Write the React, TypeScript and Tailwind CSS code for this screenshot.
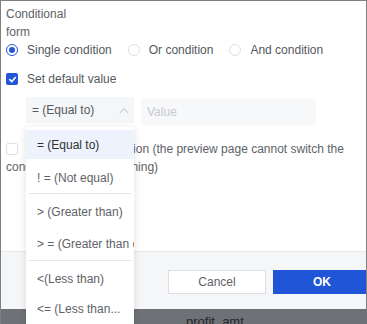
import React from "react";

function Radio({ checked, label, last }: { checked?: boolean; label: string; last?: boolean }) {
  return (
    <div className={`flex items-center ${last ? "" : "mr-[16px]"}`}>
      {checked ? (
        <span className="w-[12px] h-[12px] rounded-full border border-[#2356d6] flex items-center justify-center bg-white">
          <span className="w-[6px] h-[6px] rounded-full bg-[#2356d6]" />
        </span>
      ) : (
        <span className="w-[12px] h-[12px] rounded-full border border-[#dcdfe6] bg-white" />
      )}
      <span className="ml-[9px] text-[#55585d]">{label}</span>
    </div>
  );
}

export default function App() {
  return (
    <div className="relative w-[367px] h-[324px] overflow-hidden bg-[#7f7f7f] font-['Liberation_Sans',Arial,sans-serif] text-[12px]">
      <div className="flex flex-col pt-[1px] pl-[1px]">
        <div className="w-[365px] h-[308px] bg-white flex flex-col overflow-hidden">
          <div className="flex-1 pl-[5px] pr-[5px] pt-[4px] text-[#606266]">
            <div className="w-[70px] leading-[18px] text-[#606266]">Conditional form</div>
            <div className="flex items-center h-[18px] leading-[18px]">
              <Radio checked label="Single condition" />
              <Radio label="Or condition" />
              <Radio label="And condition" last />
            </div>
            <div className="flex items-center h-[18px] mt-[11px] leading-[18px]">
              <span className="w-[12px] h-[12px] rounded-[2px] bg-[#2356d6] flex items-center justify-center">
                <svg width="9" height="9" viewBox="0 0 10 10">
                  <polyline points="2,5.2 4.2,7.3 8.2,2.8" fill="none" stroke="white" strokeWidth="1.8" strokeLinecap="round" strokeLinejoin="round" />
                </svg>
              </span>
              <span className="ml-[9px] text-[#55585d]">Set default value</span>
            </div>
            <div className="flex mt-[9px] pl-[20px]">
              <div className="w-[108px] h-[26px] bg-[#f5f6f8] flex items-center pl-[6px] pr-[5px] text-[#55585d]">
                <span className="flex-1">= (Equal to)</span>
                <svg width="10" height="7" viewBox="0 0 10 7">
                  <polyline points="0.8,6 5,1.5 9.2,6" fill="none" stroke="#b8bbc1" strokeWidth="1" />
                </svg>
              </div>
              <div className="ml-[7px] mt-[2px] w-[175px] h-[26px] bg-[#f7f8fa] flex items-center pl-[6px] text-[#c8cacf]">
                Value
              </div>
            </div>
            <div className="mt-[15px] leading-[18px] text-[#606266]">
              <span className="inline-block w-[12px] h-[12px] border border-[#dcdfe6] rounded-[2px] bg-white align-[-2px] mr-[9px]" />
              Enable query condition (the preview page cannot switch the condition during the running)
            </div>
          </div>
          <div className="h-[58px] shrink-0 border-t border-[#e6e8ec] bg-[#f5f6f8] flex pl-[167px] pt-[18px] gap-[7px]">
            <div className="w-[98px] h-[24px] shrink-0 bg-white border border-[#dcdfe6] flex items-center justify-center text-[#606266]">
              Cancel
            </div>
            <div className="w-[98px] h-[24px] shrink-0 bg-[#2155d7] flex items-center justify-center text-white font-bold">
              OK
            </div>
          </div>
        </div>
        <div className="h-[15px] bg-[#6e7175] overflow-hidden pl-[185px] pt-[4px] text-[13px] leading-[18px] text-[#25272a]">
          profit_amt
        </div>
      </div>
      <div className="absolute left-[26px] top-[127px] w-[108px] h-[200px] bg-white shadow-[0_2px_8px_rgba(0,0,0,0.12)] pt-[3px] overflow-hidden">
        <div className="h-[29px] bg-[#edf2fc] flex items-center pl-[11px] text-[#303133] whitespace-nowrap overflow-hidden">= (Equal to)</div>
        <div className="mt-[4px] h-[29px] flex items-center pl-[11px] text-[#606266] whitespace-nowrap overflow-hidden">! = (Not equal)</div>
        <div className="mt-[1px] mx-[3px] h-[1px] bg-[#e4e6ea]" />
        <div className="mt-[3px] h-[29px] flex items-center pl-[11px] text-[#606266] whitespace-nowrap overflow-hidden">&gt; (Greater than)</div>
        <div className="mt-[3px] h-[29px] flex items-center pl-[11px] text-[#606266] whitespace-nowrap overflow-hidden">&gt; = (Greater than or equal)</div>
        <div className="mt-[2px] mx-[3px] h-[1px] bg-[#e4e6ea]" />
        <div className="mt-[3px] h-[29px] flex items-center pl-[11px] text-[#606266] whitespace-nowrap overflow-hidden">&lt;(Less than)</div>
        <div className="mt-[1px] h-[29px] flex items-center pl-[11px] text-[#606266] whitespace-nowrap overflow-hidden">&lt;= (Less than...</div>
      </div>
    </div>
  );
}
